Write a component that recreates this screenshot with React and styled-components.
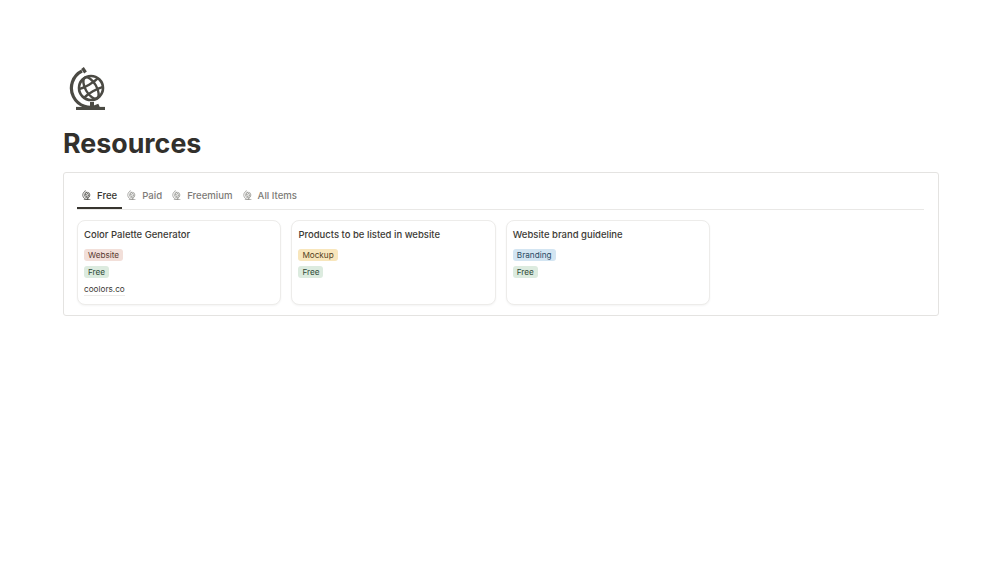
import React from "react";
import styled, { createGlobalStyle } from "styled-components";

const Global = createGlobalStyle`
  html, body { margin: 0; padding: 0; background: #fff; }
  body { font-family: Inter, "Noto Sans", sans-serif; color: #32302c; }
`;

const Page = styled.main`
  width: 1005px;
  height: 565px;
  box-sizing: border-box;
  padding: 66px 66px 0 63px;
  overflow: hidden;
`;
const PageIcon = styled.div`
  height: 44px;
  padding-left: 5px;
  color: #4b4a44;
`;
const Title = styled.h1`
  margin: 14px 0 0;
  font-size: 26.8px;
  line-height: 38px;
  font-weight: 700;
  color: #32302c;
`;
const Panel = styled.section`
  margin-top: 10px;
  height: 144px;
  box-sizing: border-box;
  border: 1px solid #e4e3e1;
  border-radius: 3px;
  padding: 10px 14px 0 13px;
`;
const Tabs = styled.nav`
  display: flex;
  height: 27px;
  box-sizing: border-box;
  border-bottom: 1px solid #e9e8e6;
`;
const Tab = styled.div`
  display: flex;
  align-items: center;
  gap: 5px;
  height: 26px;
  box-sizing: border-box;
  padding: 0 5px ${p => (p.$active ? "0" : "2px")};
  font-size: 9.6px;
  font-weight: 500;
  color: ${p => (p.$active ? "#37352f" : "#7d7b77")};
  border-bottom: ${p => (p.$active ? "2px solid #37352f" : "none")};
`;
const TabIcon = styled.span`
  display: flex;
  color: ${p => (p.$active ? "#45443f" : "#8f8e8a")};
`;
const Cards = styled.div`
  display: grid;
  grid-template-columns: repeat(4, 204.4px);
  gap: 10px;
  margin-top: 10px;
`;
const Card = styled.article`
  height: 85px;
  box-sizing: border-box;
  padding: 6px 6px 0;
  border: 1px solid #edecea;
  border-radius: 8px;
  background: #fff;
  box-shadow: 0 1px 2px rgba(40, 38, 30, 0.05);
`;
const CardTitle = styled.div`
  font-size: 9.5px;
  line-height: 15px;
  font-weight: 500;
  color: #3c3a35;
`;
const Tags = styled.div`
  display: flex;
  flex-direction: column;
  align-items: flex-start;
  gap: 5.4px;
  margin-top: 6.7px;
`;
const Tag = styled.span`
  font-size: 8.2px;
  line-height: 12px;
  padding: 0 4px;
  border-radius: 3px;
  color: ${p => p.$fg};
  background: ${p => p.$bg};
`;
const Link = styled.div`
  margin-top: 5px;
  font-size: 8.2px;
  line-height: 12px;
  height: 12px;
  width: max-content;
  color: #3c3a35;
  border-bottom: 1px solid #ecebe9;
`;

const Globe = ({ size }) => (
  <svg width={size} height={size} viewBox="0 0 44 44" fill="none" stroke="currentColor" aria-hidden="true">
    <circle cx="23" cy="22" r="12" strokeWidth="2.6" />
    <g transform="rotate(-30 23 22)" strokeWidth="2.4">
      <ellipse cx="23" cy="22" rx="5.5" ry="12" />
      <path d="M12 17c6 1.6 16 1.6 22 0" />
      <path d="M12 27c6-1.6 16-1.6 22 0" />
    </g>
    <path d="M14 5A19 19 0 0 0 31 39.2" strokeWidth="3.2" />
    <path d="M14.5 2 17.5 6.5" strokeWidth="3.2" />
    <path d="M24 36v6" strokeWidth="4" />
    <path d="M8 42.5h29" strokeWidth="3.2" />
  </svg>
);

const tabs = [
  { label: "Free", active: true },
  { label: "Paid" },
  { label: "Freemium" },
  { label: "All Items" },
];
const green = { $fg: "#2f4a38", $bg: "#dcebdf" };
const cards = [
  { title: "Color Palette Generator", tag: "Website", fg: "#5a3a32", bg: "#f2dfd9", link: "coolors.co" },
  { title: "Products to be listed in website", tag: "Mockup", fg: "#54431f", bg: "#f8e6bc" },
  { title: "Website brand guideline", tag: "Branding", fg: "#2b4a63", bg: "#d3e5f2" },
];

export default function App() {
  return (
    <Page>
      <Global />
      <PageIcon><Globe size={44} /></PageIcon>
      <Title>Resources</Title>
      <Panel>
        <Tabs>
          {tabs.map(t => (
            <Tab key={t.label} $active={t.active}>
              <TabIcon $active={t.active}><Globe size={10} /></TabIcon>
              {t.label}
            </Tab>
          ))}
        </Tabs>
        <Cards>
          {cards.map(c => (
            <Card key={c.title}>
              <CardTitle>{c.title}</CardTitle>
              <Tags>
                <Tag $fg={c.fg} $bg={c.bg}>{c.tag}</Tag>
                <Tag {...green}>Free</Tag>
              </Tags>
              {c.link && <Link>{c.link}</Link>}
            </Card>
          ))}
        </Cards>
      </Panel>
    </Page>
  );
}
